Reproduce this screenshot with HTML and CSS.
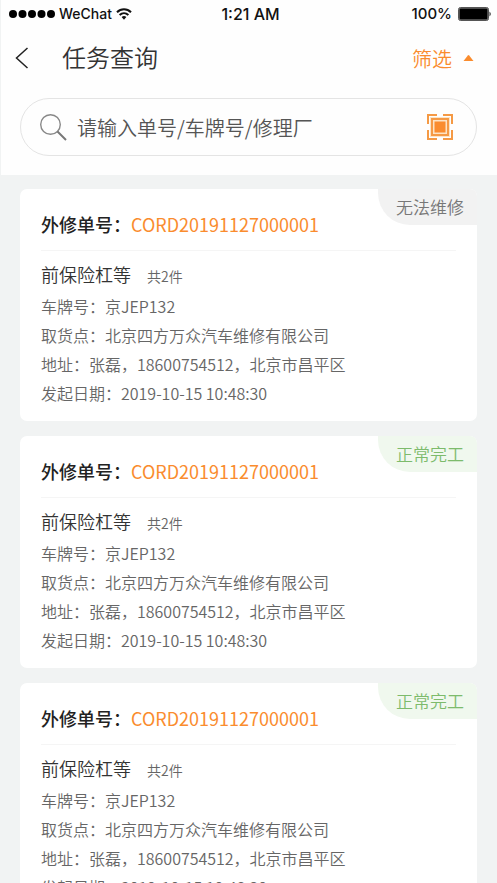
FILE: index.html
```html
<!DOCTYPE html>
<html lang="zh-CN">
<head>
<meta charset="utf-8">
<meta name="viewport" content="width=device-width, initial-scale=1">
<title>任务查询</title>
<link rel="stylesheet" href="styles.css">
</head>
<body>
<div class="app">
  <header class="header">
    <div class="status-bar">
      <div class="status-left">
        <svg class="signal" viewBox="0 0 46 10" aria-hidden="true"><circle cx="4" cy="5" r="4"/><circle cx="13.500" cy="5" r="4"/><circle cx="23" cy="5" r="4"/><circle cx="32.500" cy="5" r="4"/><circle cx="42" cy="5" r="4"/></svg>
        <span>WeChat</span>
        <svg class="wifi" viewBox="0 0 16 12" aria-hidden="true"><path d="M1 4.300C5 .3 11 .3 15 4.300M3.600 7C6.200 4.500 9.800 4.500 12.400 7" fill="none" stroke="#111" stroke-width="2"/><path d="M5.600 9Q8 7 10.400 9L8 11.700Z" fill="#111"/></svg>
      </div>
      <time>1:21 AM</time>
      <div class="status-right">
        <span>100%</span>
        <svg class="battery" viewBox="0 0 34 14" aria-hidden="true"><rect x=".5" y=".5" width="30" height="13" rx="2" fill="#999" stroke="#555"/><rect x="1.500" y="1.500" width="28" height="11" rx="1" fill="#000"/><path d="M31.500 4.500Q34 7 31.500 9.500Z" fill="#222"/></svg>
      </div>
    </div>
    <div class="nav">
      <button class="back" type="button" aria-label="返回"><svg viewBox="0 0 14 22"><path d="M12.500 1L1.500 11L12.500 21" fill="none" stroke="#222" stroke-width="1.500"/></svg></button>
      <h1>任务查询</h1>
      <button class="filter" type="button">筛选<svg viewBox="0 0 10 6" aria-hidden="true"><path d="M0 6L4.300.4Q5-.2 5.700.4L10 6Z" fill="#fa8c2e"/></svg></button>
    </div>
    <form class="search">
      <svg class="search-icon" viewBox="0 0 27 27" aria-hidden="true"><circle cx="10.500" cy="10.500" r="9.800" fill="none" stroke="#888" stroke-width="1.400"/><path d="M17.500 17.500L26 26" stroke="#777" stroke-width="2"/></svg>
      <input type="search" aria-label="搜索" placeholder="请输入单号/车牌号/修理厂">
      <button class="scan" type="button" aria-label="扫码"><svg viewBox="0 0 28 28"><rect x="4" y="4" width="20" height="20" fill="#fde3c4"/><g fill="none" stroke="#f59a45" stroke-width="2"><path d="M2 11V2H11M17 2H26V11M26 17V26H17M11 26H2V17"/><rect x="6" y="6" width="16" height="16"/></g><rect x="9" y="9" width="10" height="10" fill="#fa8c2e" stroke="#fa8c2e"/></svg></button>
    </form>
  </header>
  <main class="list">
    <article class="card">
      <span class="badge badge-fail">无法维修</span>
      <h2>外修单号：<a href="#">CORD20191127000001</a></h2>
      <h3>前保险杠等<small>共2件</small></h3>
      <p>车牌号：京JEP132</p>
      <p>取货点：北京四方万众汽车维修有限公司</p>
      <p>地址：张磊，18600754512，北京市昌平区</p>
      <p>发起日期：2019-10-15 10:48:30</p>
    </article>
    <article class="card">
      <span class="badge badge-done">正常完工</span>
      <h2>外修单号：<a href="#">CORD20191127000001</a></h2>
      <h3>前保险杠等<small>共2件</small></h3>
      <p>车牌号：京JEP132</p>
      <p>取货点：北京四方万众汽车维修有限公司</p>
      <p>地址：张磊，18600754512，北京市昌平区</p>
      <p>发起日期：2019-10-15 10:48:30</p>
    </article>
    <article class="card">
      <span class="badge badge-done">正常完工</span>
      <h2>外修单号：<a href="#">CORD20191127000001</a></h2>
      <h3>前保险杠等<small>共2件</small></h3>
      <p>车牌号：京JEP132</p>
      <p>取货点：北京四方万众汽车维修有限公司</p>
      <p>地址：张磊，18600754512，北京市昌平区</p>
      <p>发起日期：2019-10-15 10:48:30</p>
    </article>
  </main>
</div>
</body>
</html>
```
FILE: styles.css
```css
* {
  box-sizing: border-box;
}

body,
h1,
h2,
h3,
p {
  margin: 0;
}

body {
  background: #f1f3f3;
  color: #666;
  font-family: "Noto Sans CJK SC", sans-serif;
}

button,
input {
  padding: 0;
  border: 0;
  background: none;
  font: inherit;
}

svg {
  display: block;
  flex: none;
}

.app {
  display: flex;
  flex-direction: column;
  height: 100vh;
}

.header {
  flex: none;
  padding-bottom: 19px;
  border-left: 1px solid #f1f3f3;
  background: #fefefe;
}

.status-bar {
  display: grid;
  grid-template-columns: 1fr auto 1fr;
  align-items: center;
  height: 28px;
  padding: 0 5px 0 8px;
  color: #111;
  font: 500 15px/28px Inter, sans-serif;
}

.status-left,
.status-right {
  display: flex;
  align-items: center;
  gap: 4px;
}

.status-left {
  font-size: 14px;
}

.status-bar time {
  font-size: 16px;
}

.status-right {
  justify-content: flex-end;
  gap: 6px;
}

.signal {
  width: 46px;
  height: 10px;
}

.wifi {
  width: 16px;
  height: 12px;
}

.battery {
  width: 34px;
  height: 14px;
}

.nav {
  display: flex;
  align-items: center;
  height: 60px;
  margin-bottom: 10px;
  padding: 0 23px 0 14px;
}

.back svg {
  width: 14px;
  height: 22px;
}

.nav h1 {
  flex: 1;
  padding-left: 33px;
  color: #333;
  font-size: 24px;
  font-weight: 350;
  line-height: 36px;
  margin-bottom: 3px;
}

.filter {
  display: flex;
  align-items: center;
  gap: 11px;
  color: #fa8c2e;
  font-size: 20px;
  font-weight: 350;
}

.filter svg {
  width: 11px;
  height: 6px;
}

.search {
  display: flex;
  align-items: center;
  gap: 10px;
  height: 58px;
  margin: 0 20px 0 19px;
  padding: 0 22px 0 19px;
  border: 1px solid #e4e4e4;
  border-radius: 29px;
}

.search-icon {
  width: 27px;
  height: 27px;
}

.search input {
  flex: 1;
  min-width: 0;
  height: 40px;
  outline: 0;
  color: #555;
  font-size: 20px;
  font-weight: 350;
  appearance: none;
}

.search input::placeholder {
  color: #555;
  opacity: 1;
}

.scan svg {
  width: 28px;
  height: 28px;
}

.list {
  display: flex;
  flex: 1;
  flex-direction: column;
  gap: 15px;
  min-height: 0;
  padding: 14px 20px;
  overflow-y: auto;
  scrollbar-width: none;
}

.card {
  position: relative;
  flex: none;
  padding: 10px 21px 13px;
  border-radius: 7px;
  background: #fff;
}

.card h2 {
  height: 52px;
  border-bottom: 1px solid #f5f5f5;
  color: #222;
  font-size: 18px;
  font-weight: 500;
  line-height: 51px;
}

.card h2 a {
  color: #fa8c2e;
  font-weight: 400;
  text-decoration: none;
}

.card h3 {
  display: flex;
  align-items: baseline;
  gap: 16px;
  height: 36px;
  margin-top: 5px;
  color: #333;
  font-size: 18px;
  font-weight: 350;
  line-height: 36px;
}

.card small {
  color: #666;
  font-size: 14px;
}

.card p {
  font-size: 16px;
  font-weight: 350;
  line-height: 29px;
}

.badge {
  position: absolute;
  top: 0;
  right: 0;
  padding: 0 13px 0 18px;
  border-radius: 0 7px 0 32px;
  font-size: 17px;
  font-weight: 350;
  line-height: 36px;
}

.badge-fail {
  background: #f2f2f2;
  color: #777;
}

.badge-done {
  background: #f0f8ee;
  color: #7dbb6c;
}
```
